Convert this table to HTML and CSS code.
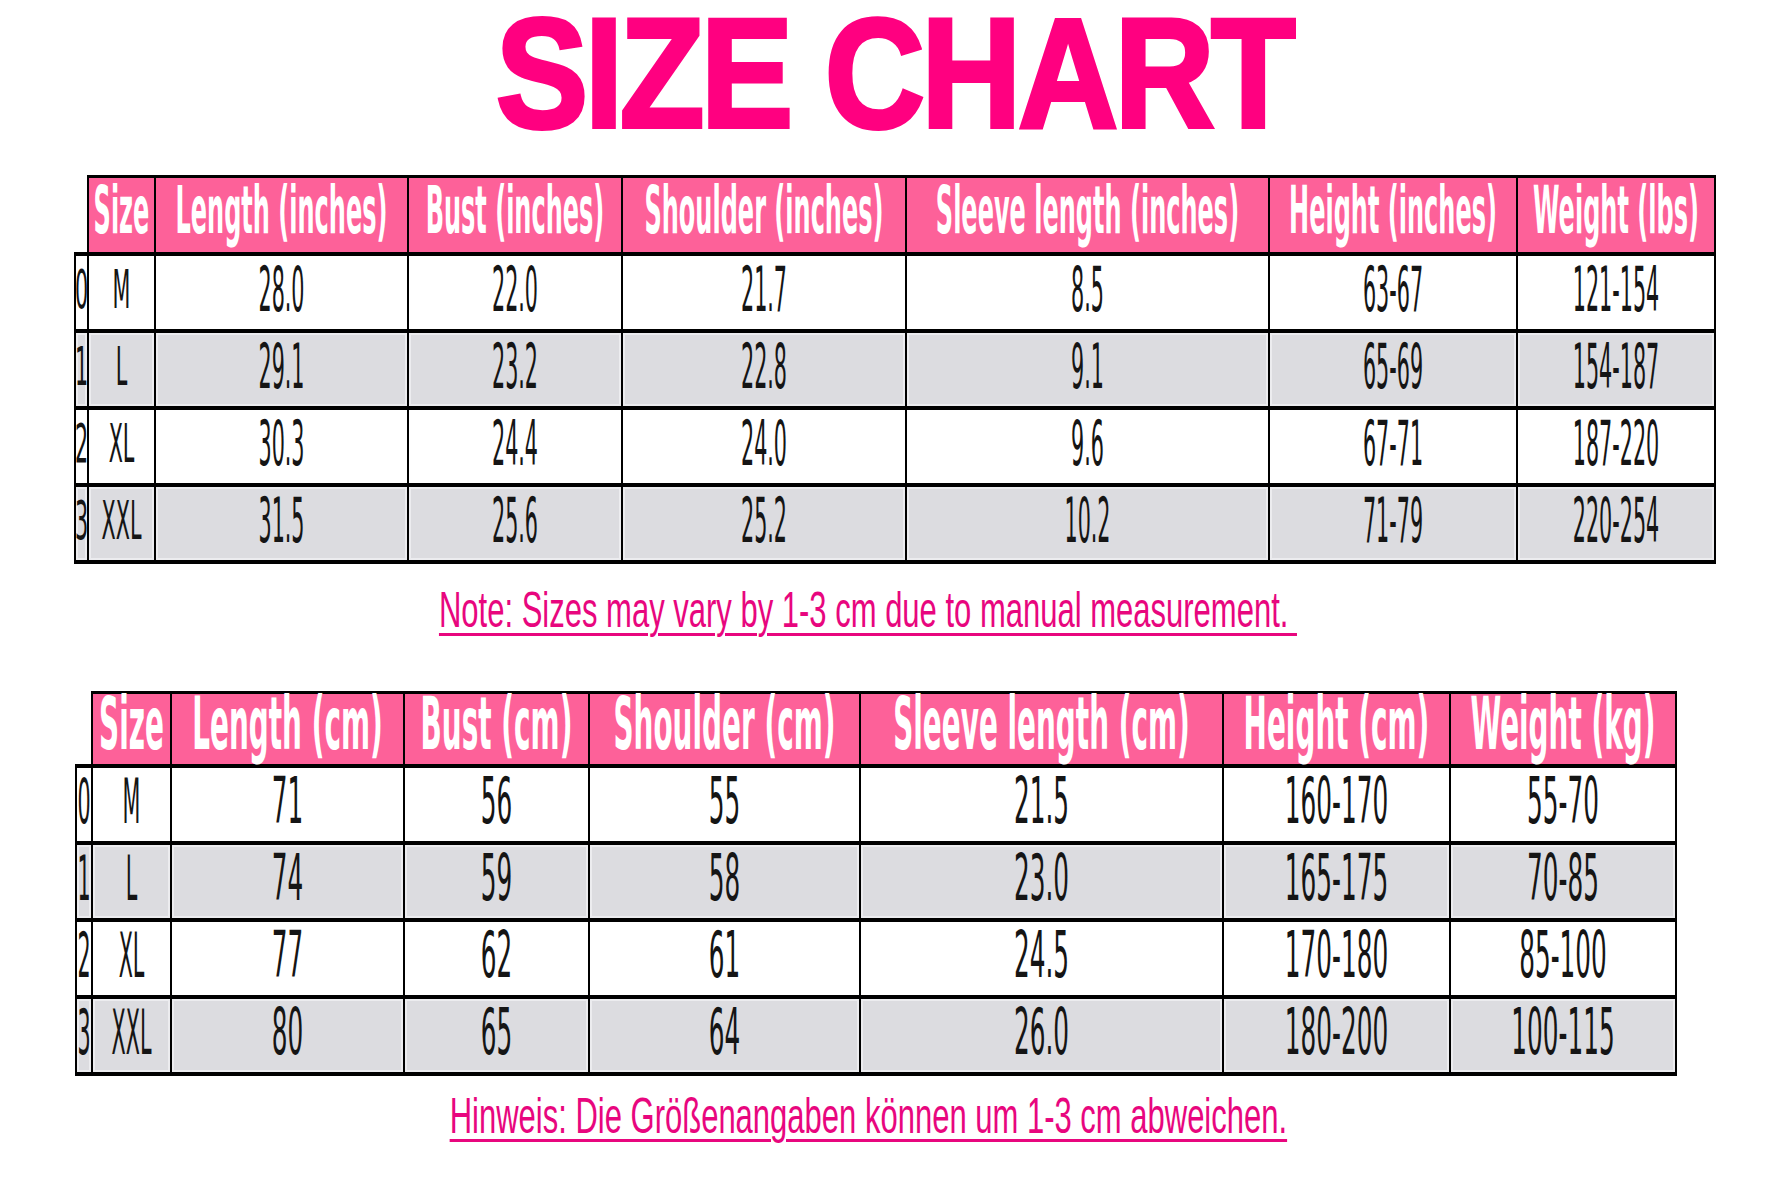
FILE: index.html
```html
<!DOCTYPE html>
<html>
<head>
<meta charset="utf-8">
<link rel="stylesheet" href="styles.css">
</head>
<body>
<div class="page">
  <h1 class="title"><span>SIZE CHART</span></h1>

  <div class="chart chart-in">
    <div class="c corner"></div>
    <div class="c h"><span class="ht">Size</span></div>
    <div class="c h"><span class="ht">Length (inches)</span></div>
    <div class="c h"><span class="ht">Bust (inches)</span></div>
    <div class="c h"><span class="ht">Shoulder (inches)</span></div>
    <div class="c h"><span class="ht">Sleeve length (inches)</span></div>
    <div class="c h"><span class="ht">Height (inches)</span></div>
    <div class="c h"><span class="ht">Weight (lbs)</span></div>

    <div class="c idx"><span class="s">0</span></div>
    <div class="c"><span class="s">M</span></div>
    <div class="c"><span class="v">28.0</span></div>
    <div class="c"><span class="v">22.0</span></div>
    <div class="c"><span class="v">21.7</span></div>
    <div class="c"><span class="v">8.5</span></div>
    <div class="c"><span class="v">63-67</span></div>
    <div class="c"><span class="v">121-154</span></div>

    <div class="c idx g"><span class="s">1</span></div>
    <div class="c g"><span class="s">L</span></div>
    <div class="c g"><span class="v">29.1</span></div>
    <div class="c g"><span class="v">23.2</span></div>
    <div class="c g"><span class="v">22.8</span></div>
    <div class="c g"><span class="v">9.1</span></div>
    <div class="c g"><span class="v">65-69</span></div>
    <div class="c g"><span class="v">154-187</span></div>

    <div class="c idx"><span class="s">2</span></div>
    <div class="c"><span class="s">XL</span></div>
    <div class="c"><span class="v">30.3</span></div>
    <div class="c"><span class="v">24.4</span></div>
    <div class="c"><span class="v">24.0</span></div>
    <div class="c"><span class="v">9.6</span></div>
    <div class="c"><span class="v">67-71</span></div>
    <div class="c"><span class="v">187-220</span></div>

    <div class="c idx g"><span class="s">3</span></div>
    <div class="c g"><span class="s">XXL</span></div>
    <div class="c g"><span class="v">31.5</span></div>
    <div class="c g"><span class="v">25.6</span></div>
    <div class="c g"><span class="v">25.2</span></div>
    <div class="c g"><span class="v">10.2</span></div>
    <div class="c g"><span class="v">71-79</span></div>
    <div class="c g"><span class="v">220-254</span></div>
  </div>

  <p class="note note-en"><span>Note: Sizes may vary by 1-3 cm due to manual measurement.&nbsp;</span></p>

  <div class="chart chart-cm">
    <div class="c corner"></div>
    <div class="c h"><span class="ht">Size</span></div>
    <div class="c h"><span class="ht">Length (cm)</span></div>
    <div class="c h"><span class="ht">Bust (cm)</span></div>
    <div class="c h"><span class="ht">Shoulder (cm)</span></div>
    <div class="c h"><span class="ht">Sleeve length (cm)</span></div>
    <div class="c h"><span class="ht">Height (cm)</span></div>
    <div class="c h"><span class="ht">Weight (kg)</span></div>

    <div class="c idx"><span class="s">0</span></div>
    <div class="c"><span class="s">M</span></div>
    <div class="c"><span class="v">71</span></div>
    <div class="c"><span class="v">56</span></div>
    <div class="c"><span class="v">55</span></div>
    <div class="c"><span class="v">21.5</span></div>
    <div class="c"><span class="v">160-170</span></div>
    <div class="c"><span class="v">55-70</span></div>

    <div class="c idx g"><span class="s">1</span></div>
    <div class="c g"><span class="s">L</span></div>
    <div class="c g"><span class="v">74</span></div>
    <div class="c g"><span class="v">59</span></div>
    <div class="c g"><span class="v">58</span></div>
    <div class="c g"><span class="v">23.0</span></div>
    <div class="c g"><span class="v">165-175</span></div>
    <div class="c g"><span class="v">70-85</span></div>

    <div class="c idx"><span class="s">2</span></div>
    <div class="c"><span class="s">XL</span></div>
    <div class="c"><span class="v">77</span></div>
    <div class="c"><span class="v">62</span></div>
    <div class="c"><span class="v">61</span></div>
    <div class="c"><span class="v">24.5</span></div>
    <div class="c"><span class="v">170-180</span></div>
    <div class="c"><span class="v">85-100</span></div>

    <div class="c idx g"><span class="s">3</span></div>
    <div class="c g"><span class="s">XXL</span></div>
    <div class="c g"><span class="v">80</span></div>
    <div class="c g"><span class="v">65</span></div>
    <div class="c g"><span class="v">64</span></div>
    <div class="c g"><span class="v">26.0</span></div>
    <div class="c g"><span class="v">180-200</span></div>
    <div class="c g"><span class="v">100-115</span></div>
  </div>

  <p class="note note-de"><span>Hinweis: Die Größenangaben können um 1-3 cm abweichen.</span></p>
</div>
</body>
</html>
```

FILE: styles.css
```css
html, body {
  margin: 0;
  padding: 0;
  background: #ffffff;
}

.page {
  width: 1772px;
  height: 1181px;
  overflow: hidden;
}

.title {
  margin: 0;
  height: 148px;
  line-height: 148px;
  text-align: center;
  padding-left: 16px;
  font-family: "Liberation Sans", Arial, sans-serif;
  font-weight: 700;
  font-size: 155px;
  color: #ff0080;
  letter-spacing: -4px;
}

.title span {
  display: inline-block;
  transform: scaleX(0.895);
  -webkit-text-stroke: 4px #ff0080;
}

.chart {
  display: grid;
}

.chart-in {
  margin-top: 27px;
  margin-left: 74px;
  grid-template-columns: 15px 67px 253px 214px 284px 363px 248px 198px;
}

.chart-cm {
  margin-top: 51px;
  margin-left: 75px;
  grid-template-columns: 18px 79px 233px 185px 271px 363px 227px 226px;
}

.c {
  box-sizing: border-box;
  height: 77px;
  border-right: 2px solid #000;
  border-bottom: 4px solid #000;
  display: flex;
  align-items: center;
  justify-content: center;
  background: #ffffff;
  white-space: nowrap;
  padding-bottom: 5px;
}

.c.g {
  background: #dcdce0;
  box-shadow: inset 0 0 0 2px #ececef;
}

.idx {
  border-left: 2px solid #000;
}

.corner {
  background: transparent;
}

.h {
  background: #fd6199;
  border-top: 3px solid #000;
}

.chart-in .h,
.chart-in .corner {
  height: 81px;
  padding-bottom: 7px;
}

.chart-cm .h,
.chart-cm .corner {
  height: 77px;
  padding-bottom: 10px;
}

.ht {
  display: inline-block;
  font-family: "DejaVu Sans Condensed", "DejaVu Sans", sans-serif;
  font-stretch: condensed;
  font-weight: 700;
  color: #ffffff;
  line-height: 1;
}

.chart-in .ht {
  font-size: 26.7px;
  transform: scaleY(2.45);
}

.chart-cm .ht {
  font-size: 31px;
  transform: scaleY(2.35);
}

.v, .s {
  display: inline-block;
  font-family: "DejaVu Sans Condensed", "DejaVu Sans", sans-serif;
  font-stretch: condensed;
  font-weight: 400;
  color: #151515;
  line-height: 1;
}

.chart-in .v {
  font-size: 23px;
  transform: scaleY(2.68);
}

.chart-in .s {
  font-size: 23px;
  transform: scaleY(2.33);
}

.chart-cm .v {
  font-size: 27.5px;
  transform: scaleY(2.32);
}

.chart-cm .s {
  font-size: 23px;
  transform: scaleY(2.68);
}

.note {
  margin: 0;
  text-align: center;
  padding-right: 36px;
  font-family: "Liberation Sans", Arial, sans-serif;
  font-size: 50px;
  line-height: 60px;
  height: 60px;
  color: #e8067e;
  white-space: nowrap;
}

.note span {
  display: inline-block;
  transform: scaleX(0.62);
  text-decoration: underline;
  text-decoration-thickness: 3px;
  text-underline-offset: 6px;
}

.note-en {
  margin-top: 16px;
}

.note-de {
  margin-top: 10px;
}
```
